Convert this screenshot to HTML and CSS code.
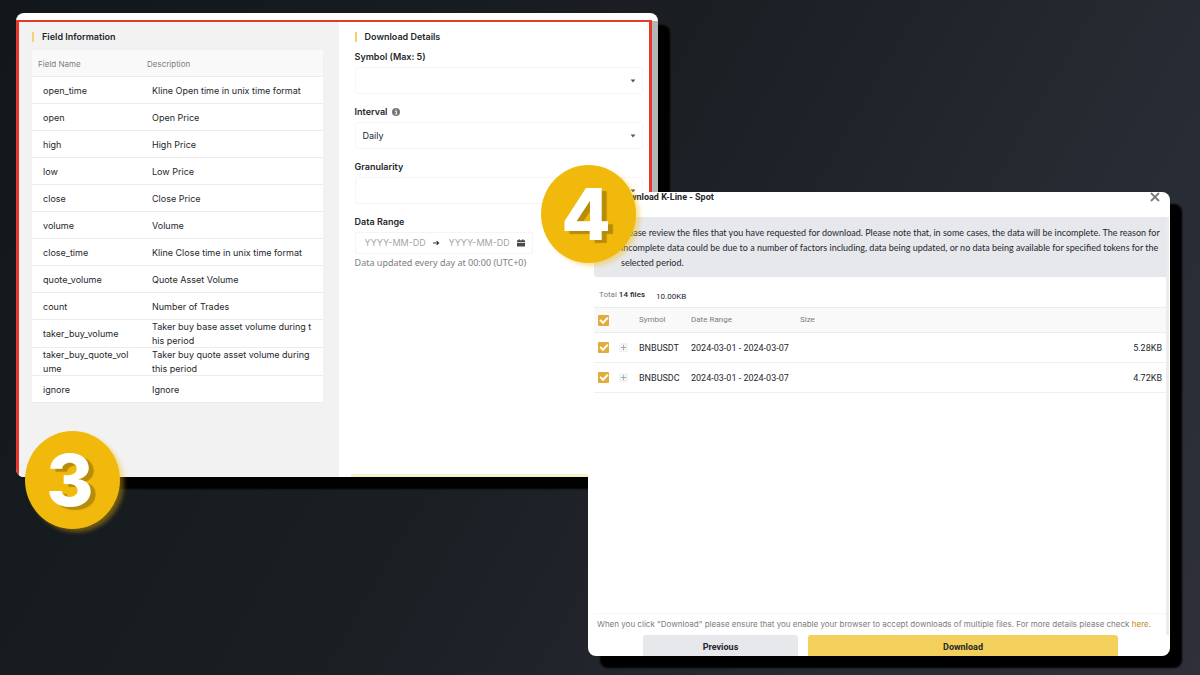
FILE: index.html
```html
<!DOCTYPE html>
<html lang="en">
<head>
<meta charset="utf-8">
<meta name="viewport" content="width=device-width, initial-scale=1">
<title>Download K-Line - Spot</title>
<link rel="stylesheet" href="styles.css">
</head>
<body>
<main class="stage">
  <section class="window window-details">
    <div class="frame">
      <div class="frame-body">
        <div class="fields">
          <h2 class="heading">Field Information</h2>
          <table class="field-table">
            <thead><tr><th>Field Name</th><th>Description</th></tr></thead>
            <tbody>
              <tr><td>open_time</td><td>Kline Open time in unix time format</td></tr>
              <tr><td>open</td><td>Open Price</td></tr>
              <tr><td>high</td><td>High Price</td></tr>
              <tr><td>low</td><td>Low Price</td></tr>
              <tr><td>close</td><td>Close Price</td></tr>
              <tr><td>volume</td><td>Volume</td></tr>
              <tr><td>close_time</td><td>Kline Close time in unix time format</td></tr>
              <tr><td>quote_volume</td><td>Quote Asset Volume</td></tr>
              <tr><td>count</td><td>Number of Trades</td></tr>
              <tr><td>taker_buy_volume</td><td>Taker buy base asset volume during t<br>his period</td></tr>
              <tr><td>taker_buy_quote_vol<br>ume</td><td>Taker buy quote asset volume during<br>this period</td></tr>
              <tr><td>ignore</td><td>Ignore</td></tr>
            </tbody>
          </table>
        </div>
        <form class="details">
          <h2 class="heading">Download Details</h2>
          <div class="field">
            <label for="symbol">Symbol (Max: 5)</label>
            <div class="select-box">
              <select id="symbol"><option></option></select>
              <svg class="caret" viewBox="0 0 6 4"><path d="M.6.5h4.8L3 3.5z"/></svg>
            </div>
          </div>
          <div class="field">
            <label for="interval">Interval
              <svg class="info" viewBox="0 0 8 8"><circle cx="4" cy="4" r="4" fill="#777"/><path d="M3.1 3.3h1.4v2.6M3 6h2.2M3.6 1.9h1" stroke="#fff" stroke-width=".9" fill="none"/></svg>
            </label>
            <div class="select-box">
              <select id="interval"><option>Daily</option></select>
              <svg class="caret" viewBox="0 0 6 4"><path d="M.6.5h4.8L3 3.5z"/></svg>
            </div>
          </div>
          <div class="field">
            <label for="granularity">Granularity</label>
            <div class="select-box">
              <select id="granularity"><option></option></select>
              <svg class="caret" viewBox="0 0 6 4"><path d="M.6.5h4.8L3 3.5z"/></svg>
            </div>
          </div>
          <div class="field">
            <label for="from">Data Range</label>
            <div class="range">
              <input id="from" type="text" placeholder="YYYY-MM-DD">
              <svg class="arrow" viewBox="0 0 8 8"><path d="M1 4h5.4M4.6 2.2 6.6 4 4.6 5.8" stroke="#333" stroke-width="1.1" fill="none"/></svg>
              <input id="to" type="text" placeholder="YYYY-MM-DD">
              <svg class="calendar" viewBox="0 0 8 8"><path d="M1.6.3h1.2v.9h2.4V.3h1.2v.9H8v2H0v-2h1.6zM0 3.9h8v3.5H0z" fill="#4a4a4a"/></svg>
            </div>
            <p class="note">Data updated every day at 00:00 (UTC+0)</p>
          </div>
          <div class="action-edge"></div>
        </form>
      </div>
    </div>
    <div class="scrollbar"></div>
  </section>

  <section class="window window-review">
    <header class="review-head">
      <h2>Download K-Line - Spot</h2>
      <button class="close" type="button"><svg viewBox="0 0 10 10"><path d="M1 1l8 8M9 1 1 9" stroke="#777a80" stroke-width="1.8"/></svg></button>
    </header>
    <div class="review-body">
      <p class="notice">Please review the files that you have requested for download. Please note that, in some cases, the data will be incomplete. The reason for<br>incomplete data could be due to a number of factors including, data being updated, or no data being available for specified tokens for the<br>selected period.</p>
      <div class="totals"><span>Total <b>14 files</b></span><span class="total-size">10.00KB</span></div>
      <table class="file-table">
        <thead>
          <tr><th class="c-check"><input type="checkbox" checked></th><th class="c-plus"></th><th class="c-symbol">Symbol</th><th class="c-range">Date Range</th><th>Size</th></tr>
        </thead>
        <tbody>
          <tr><td><input type="checkbox" checked></td><td><button class="plus" type="button"><svg viewBox="0 0 10 10"><path d="M5 2v6M2 5h6" stroke="#a3a6aa"/></svg></button></td><td>BNBUSDT</td><td>2024-03-01 - 2024-03-07</td><td class="size">5.28KB</td></tr>
          <tr><td><input type="checkbox" checked></td><td><button class="plus" type="button"><svg viewBox="0 0 10 10"><path d="M5 2v6M2 5h6" stroke="#a3a6aa"/></svg></button></td><td>BNBUSDC</td><td>2024-03-01 - 2024-03-07</td><td class="size">4.72KB</td></tr>
        </tbody>
      </table>
      <p class="hint">When you click "Download" please ensure that you enable your browser to accept downloads of multiple files. For more details please check <a href="#">here.</a></p>
    </div>
    <footer class="actions">
      <button class="previous" type="button">Previous</button>
      <button class="download" type="button">Download</button>
    </footer>
  </section>

  <div class="badge badge-three">3</div>
  <div class="badge badge-four">4</div>
</main>
</body>
</html>
```

FILE: styles.css
```css
* { box-sizing: border-box; }
body { margin: 0; font: 9px/14px Inter, sans-serif; color: #24272c; }
h2, p { margin: 0; }
button, input, select { font: inherit; color: inherit; padding: 0; border: 0; background: none; }
svg { display: block; }

.stage {
  position: relative;
  min-height: 100vh;
  overflow: hidden;
  background: linear-gradient(120deg, #11171b 0%, #1b1f24 45%, #282c34 80%, #2f3039 100%);
}

.window {
  position: absolute;
  display: flex;
  overflow: hidden;
  background: #fff;
  border-radius: 8px;
  box-shadow: 12px 12px 2px #000;
}
.window-details { left: 1.34%; top: 13px; width: 53.5%; min-height: 464px; padding-top: 7px; }
.window-review { left: 49%; top: 192px; width: 48.5%; min-height: 464px; flex-direction: column; border-top-left-radius: 0; font-family: Roboto, sans-serif; }

/* Field and form panel */
.frame { flex: 1; display: flex; border: solid #e8372b; border-width: 2px 3px 0; }
.frame-body { flex: 1; display: grid; grid-template-columns: 320fr 311fr; }
.scrollbar { width: 6px; margin-top: 1px; background: #b5b5b5; }
.fields { padding: 7px 16px 0 13px; background: #f2f2f2; }
.details { display: flex; flex-direction: column; padding: 7px 6px 0 16px; }
.heading { display: flex; align-items: center; gap: 8px; font-size: 9px; line-height: 16px; font-weight: 600; }
.heading::before { content: ""; width: 2px; height: 10px; background: #f6d078; }

.field-table { width: 100%; margin-top: 5px; border-spacing: 0; table-layout: fixed; background: #fff; }
.field-table th { height: 27px; padding: 0 6px; font-weight: 400; font-size: 8px; text-align: left; color: #7b7d81; background: #f9f9f9; box-shadow: inset 0 -1px #ececec; }
.field-table th:first-child { width: 37.5%; }
.field-table td { height: 27px; padding: 0 0 0 11px; white-space: nowrap; box-shadow: inset 0 -1px #ececec; }

.details .heading { margin-bottom: 4px; }
.field { margin-bottom: 10px; }
.field label { display: flex; align-items: center; gap: 5px; margin-bottom: 2px; line-height: 16px; font-weight: 600; }
.info { width: 8px; height: 8px; }
.select-box { display: grid; align-items: center; }
.select-box > * { grid-area: 1 / 1; }
.select-box select { width: 100%; height: 27px; padding-left: 7px; appearance: none; border: 1px solid #f5f5f5; border-radius: 2px; }
.caret { width: 6px; height: 4px; margin-right: 7px; justify-self: end; fill: #555; pointer-events: none; }
.range { display: flex; align-items: center; width: 178px; height: 22px; padding: 0 7px 0 9px; border: 1px solid #f5f5f5; }
.range input { width: 62px; }
.range input::placeholder { color: #a5a5a5; opacity: 1; }
.arrow { width: 8px; height: 8px; margin: 0 9px 0 5px; }
.calendar { width: 8px; height: 8px; margin-left: auto; }
.note { margin-top: 2px; color: #7b7d81; white-space: nowrap; font-family: "Noto Sans", sans-serif; }
.action-edge { height: 3px; margin: auto 0 0 -4px; background: #faf0c4; }

/* Review panel */
.review-head { display: flex; justify-content: space-between; align-items: center; height: 25px; padding: 0 10px 15px 31px; }
.review-head h2 { font-size: 9px; line-height: 10px; font-weight: 700; white-space: nowrap; }
.close, .close svg { width: 10px; height: 10px; }
.review-body { flex: 1; display: flex; flex-direction: column; margin-right: 1px; padding-left: 6px; border-right: 3px solid #ececee; }
.notice { padding: 8px 0 7px 27px; font-family: Lato, sans-serif; line-height: 15px; white-space: nowrap; background: #e7e8ec; border-radius: 3px 0 0 3px; }
.totals { display: flex; gap: 11px; height: 30px; padding: 11px 5px 0; font-size: 8px; color: #7b7d81; }
.totals b { color: #24272c; font-weight: 500; }
.total-size { padding-top: 2px; color: #24272c; }
.file-table { width: 100%; border-spacing: 0; table-layout: fixed; }
.file-table th { height: 26px; padding: 0; text-align: left; font-weight: 400; font-size: 8px; color: #7b7d81; background: #f9f9f9; border: solid #ececec; border-width: 1px 0; }
.file-table td { height: 30px; padding: 0; border-bottom: 1px solid #efefef; }
.file-table th:first-child, .file-table td:first-child { padding-left: 4px; }
.c-check { width: 25px; }
.c-plus { width: 20px; }
.c-symbol { width: 52px; }
.c-range { width: 109px; }
.file-table .size { padding-right: 4px; text-align: right; }
.file-table input { display: grid; place-items: center; width: 11px; height: 11px; margin: 0; appearance: none; background: #e0ad3d; border-radius: 1px; }
.file-table input::before { content: ""; width: 6px; height: 3px; margin-bottom: 2px; border: solid #fff; border-width: 0 0 2px 2px; transform: rotate(-45deg); }
.plus, .plus svg { display: block; width: 9px; height: 9px; background: #f3f4f4; }
.hint { margin-top: auto; padding: 3px 0 4px 3px; font-family: Inter, sans-serif; font-size: 8px; white-space: nowrap; color: #7b7d81; border-top: 1px solid #f6f6f6; }
.hint a { color: #c58a22; text-decoration: none; }
.actions { display: grid; grid-template-columns: 155fr 310fr; gap: 10px; padding: 0 52px 0 55px; }
.actions button { height: 21px; padding-top: 3px; font-weight: 700; border-radius: 3px 3px 0 0; }
.previous { background: #e7e8ec; }
.download { background: #f3d05c; }

/* Step markers */
.badge {
  position: absolute;
  display: grid;
  place-items: center;
  width: 95px;
  height: 98px;
  padding-right: 5px;
  border-radius: 50%;
  background: #f0b90b;
  box-shadow: 4px 3px 4px rgba(240, 185, 11, .4);
  color: #fff;
  font-family: Inter, sans-serif;
  font-size: 72px;
  font-weight: 800;
  line-height: 98px;
  text-shadow: 5px 3px 1px #b68c08;
}
.badge-three { left: 2.08%; top: 431px; }
.badge-four { left: 45.08%; top: 165px; }
```
